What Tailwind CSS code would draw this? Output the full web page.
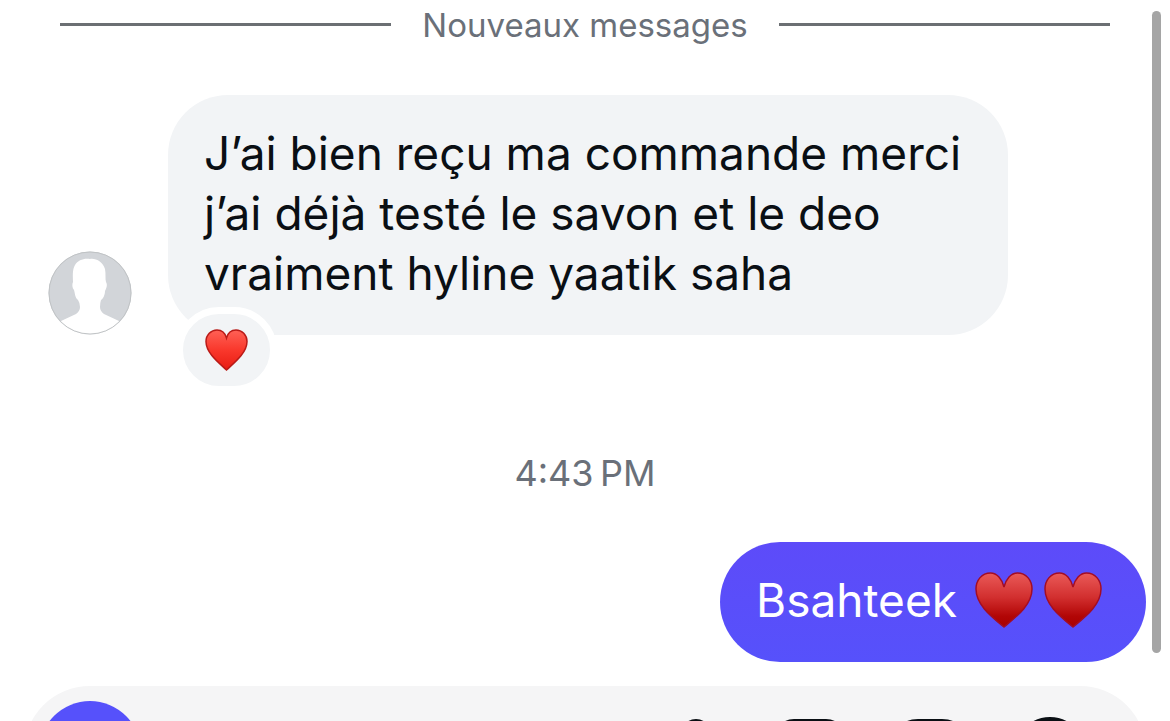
<!DOCTYPE html>
<html lang="fr">
<head>
<meta charset="utf-8">
<meta name="viewport" content="width=device-width, initial-scale=1">
<title>Messages</title>
<script src="https://cdn.jsdelivr.net/npm/@tailwindcss/browser@4"></script>
</head>
<body class="relative h-screen overflow-hidden bg-white font-['Inter','Liberation_Sans',sans-serif] text-[#0a0f14]">
<svg class="absolute h-0 w-0" aria-hidden="true">
  <defs>
    <linearGradient id="bright" x1="0" y1="0" x2="0" y2="1"><stop offset="0" stop-color="#ff6156"/><stop offset=".5" stop-color="#f9382c"/><stop offset="1" stop-color="#e81c12"/></linearGradient>
    <linearGradient id="deep" x1="0" y1="0" x2="0" y2="1"><stop offset="0" stop-color="#ea5a58"/><stop offset=".45" stop-color="#d22f2f"/><stop offset=".8" stop-color="#b20606"/><stop offset="1" stop-color="#a80000"/></linearGradient>
  </defs>
</svg>
<main class="flex h-full flex-col overflow-hidden">
  <div class="flex h-[49px] shrink-0 items-center gap-[31px] px-15">
    <span class="h-[3px] flex-1 bg-[#6b6f73]"></span>
    <h2 class="text-[33px] leading-[48px] text-[#6a7079]">Nouveaux messages</h2>
    <span class="h-[3px] flex-1 bg-[#6b6f73]"></span>
  </div>

  <div class="mt-[46px] flex shrink-0 items-end gap-9 pl-12">
    <svg class="size-[84px] shrink-0" viewBox="0 0 84 84" role="img" aria-label="Photo de profil">
      <clipPath id="round"><circle cx="42" cy="42" r="41.500"/></clipPath>
      <circle cx="42" cy="42" r="41.500" fill="#d2d5d9"/>
      <path clip-path="url(#round)" fill="#fff" d="M0 84V77L13 70L28 63Q32 60 32 56Q32 52 30 49C27 47 27 42 26 39C24 37 24 33 25 31C25 26 24 19 27 14C30 9 36 7 42 8C48 7 55 11 57 18C58 23 57 28 58 31C60 34 58 38 57 40C57 44 55 48 53 49Q52 52 52 56Q52 60 56 63L71 70L84 77V84Z"/>
      <circle cx="42" cy="42" r="41" fill="none" stroke="#c0c3c5" stroke-width="1"/>
    </svg>
    <div class="relative rounded-[60px] bg-[#f2f4f6] pt-7 pr-[47px] pb-8 pl-9">
      <p class="text-[46px] leading-[60px]">J’ai bien reçu ma commande merci<br>j’ai déjà testé le savon et le deo<br>vraiment hyline yaatik saha</p>
      <button type="button" aria-label="Réaction cœur" class="absolute -bottom-[58px] left-2 flex h-[86px] w-[101px] items-center justify-center rounded-[43px] border-[7px] border-white bg-[#f2f4f6]">
        <svg class="h-[42px] w-[43px]" viewBox="0 0 43 42"><path d="M21.500 41C14 34 1 24 1 12.500C1 6 6 1 12 1C16.500 1 20 3.500 21.500 9C23 3.500 26.500 1 31 1C37 1 42 6 42 12.500C42 24 29 34 21.500 41Z" fill="url(#bright)" stroke="#b91a17" stroke-width="1.500"/></svg>
      </button>
    </div>
  </div>

  <time class="mt-[108px] shrink-0 text-center text-[36px] leading-[60px] text-[#6a7079]">4:43&#8239;PM</time>

  <div class="mt-[39px] flex shrink-0 justify-end pr-6">
    <div class="flex h-30 items-center rounded-full bg-linear-to-b from-[#5d4bf9] to-[#5651fb] pr-11 pb-1 pl-9 text-white">
      <p class="text-[46px] leading-[60px]">Bsahteek</p>
      <span class="ml-[18px] flex gap-[11px]" role="img" aria-label="deux cœurs">
        <svg class="h-14 w-[58px]" viewBox="0 0 58 56"><path d="M29 55C17 45 1 33 1 17C1 8 7 1 15.500 1C22 1 27 7 29 15C31 7 36 1 42.500 1C51 1 57 8 57 17C57 33 41 45 29 55Z" fill="url(#deep)" stroke="#a30d25" stroke-width="1.500"/></svg>
        <svg class="h-14 w-[58px]" viewBox="0 0 58 56"><path d="M29 55C17 45 1 33 1 17C1 8 7 1 15.500 1C22 1 27 7 29 15C31 7 36 1 42.500 1C51 1 57 8 57 17C57 33 41 45 29 55Z" fill="url(#deep)" stroke="#a30d25" stroke-width="1.500"/></svg>
      </span>
    </div>
  </div>

  <form class="mx-6 mt-6 flex h-[132px] shrink-0 items-center rounded-[66px] bg-[#f5f5f6] pr-[60px] pl-[15px]">
    <button type="button" aria-label="Appareil photo" class="size-[102px] shrink-0 rounded-full bg-[#5651fb]"></button>
    <input type="text" aria-label="Message" class="h-full min-w-0 flex-1 bg-transparent px-6 text-[40px] outline-none">
    <div class="flex shrink-0 gap-12 text-[#0a0f14]">
      <button type="button" aria-label="Message vocal"><svg class="size-[72px]" viewBox="-6 0 72 72" fill="none" stroke="currentColor" stroke-width="6" stroke-linecap="round"><rect x="24" y="6" width="24" height="39" rx="12"/><path d="M12 34C12 64 60 64 60 34M36 57V67"/></svg></button>
      <button type="button" aria-label="Galerie"><svg class="size-[72px]" viewBox="0 0 72 72" fill="none" stroke="currentColor" stroke-width="6"><rect x="3" y="6" width="66" height="60" rx="17"/><circle cx="23" cy="25" r="6"/><path d="M4 58L27 38L42 52L53 42L68 56"/></svg></button>
      <button type="button" aria-label="Autocollant"><svg class="size-[72px]" viewBox="0 0 72 72" fill="none" stroke="currentColor" stroke-width="6"><path d="M24 6H48Q66 6 66 24V42L42 66H24Q6 66 6 48V24Q6 6 24 6ZM42 66V54Q42 42 54 42H66"/></svg></button>
      <button type="button" aria-label="Plus"><svg class="size-[72px]" viewBox="0 0 72 72" fill="none" stroke="currentColor" stroke-width="6" stroke-linecap="round"><circle cx="36" cy="36" r="32"/><path d="M36 21V51M21 36H51"/></svg></button>
    </div>
  </form>
</main>
<div class="absolute top-[11px] right-[9px] bottom-[68px] w-[9px] rounded-full bg-[#a5a5a5]" aria-hidden="true"></div>
</body>
</html>
